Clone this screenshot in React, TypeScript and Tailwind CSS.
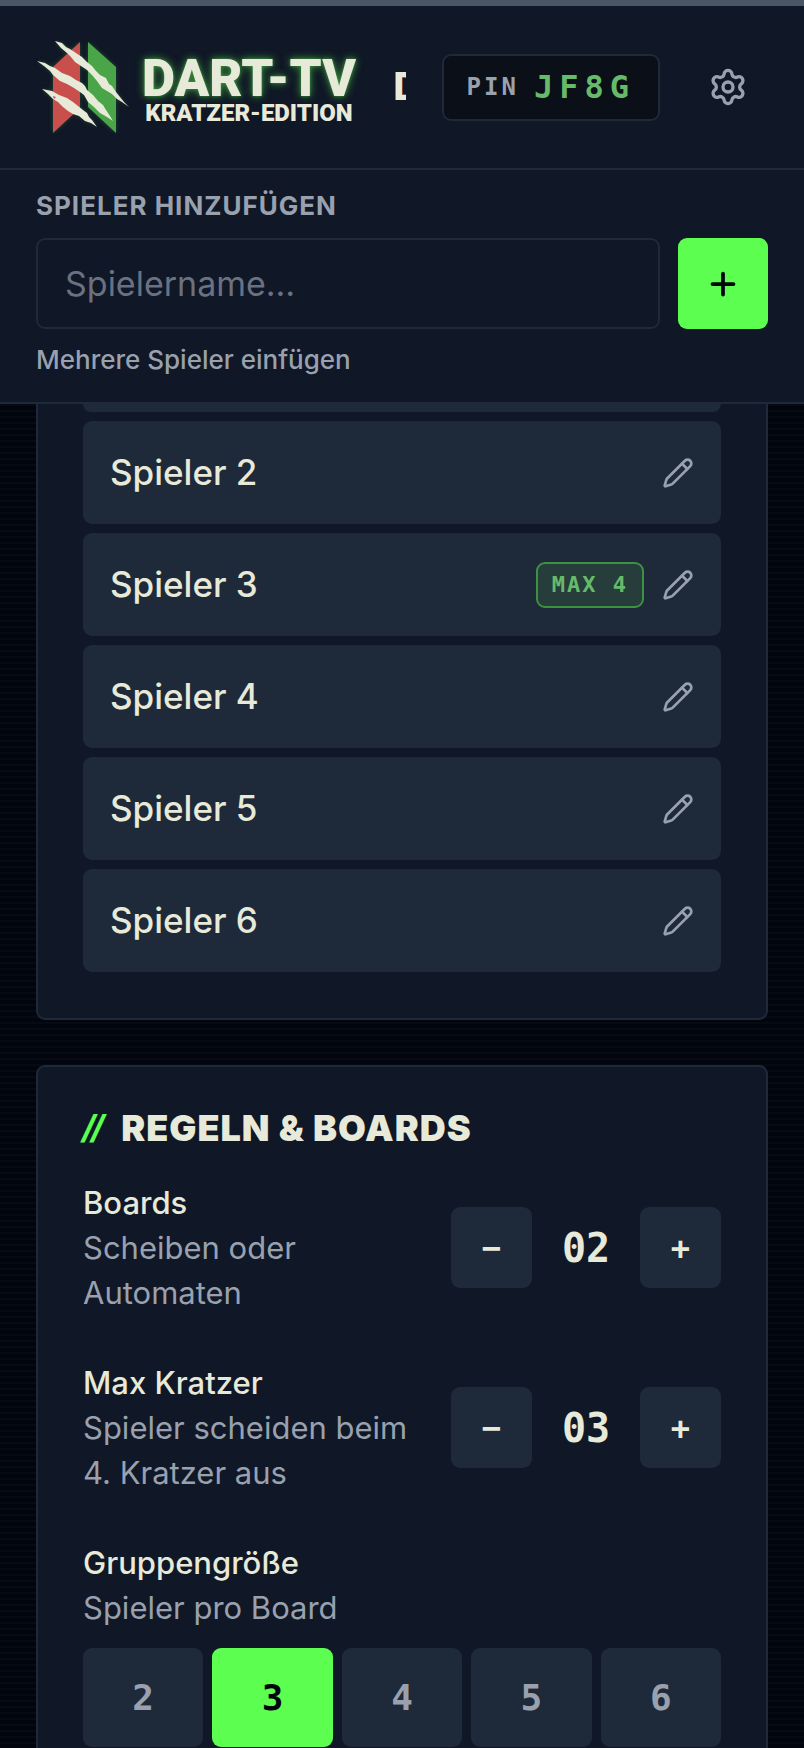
import { useState } from "react";
import { Pencil, Plus, Settings } from "lucide-react";

type Player = { name: string; max?: number };

const players: Player[] = [
  { name: "Spieler 2" },
  { name: "Spieler 3", max: 4 },
  { name: "Spieler 4" },
  { name: "Spieler 5" },
  { name: "Spieler 6" },
];

const groupSizes = [2, 3, 4, 5, 6];

function Logo() {
  return (
    <div className="flex shrink-0 items-center gap-3">
      <svg width="94" height="96" viewBox="0 0 94 96" aria-hidden="true" className="drop-shadow-[0_0_2px_rgba(76,175,80,0.3)]">
        <path d="M17 28 L44 3 V69 L17 94 Z" fill="#c94f4c" />
        <path d="M52 3 L80 28 V94 L52 68 Z" fill="#4aa548" />
        <g fill="#e7e9d9">
          <path d="M19 2 L26 4 L30 8 L34 10 L40 14 L46 18 L51 23 L56 27 L60 32 L64 36 L70 39 L73 45 L76 47 L80 53 L84 58 L88 63 L93 68 L86 63 L81 60 L76 55 L71 52 L66 49 L61 42 L56 36 L51 31 L45 27 L39 23 L35 18 L31 14 L25 9 Z" />
          <path d="M1 22 L9 24 L14 27 L19 29 L26 34 L34 37 L40 41 L46 44 L49 47 L51 51 L57 56 L62 62 L67 66 L70 71 L74 77 L77 82 L71 78 L64 74 L58 68 L52 63 L48 56 L44 53 L38 49 L31 45 L24 42 L17 36 L14 32 L8 27 Z" />
          <path d="M6 50 L11 51 L16 52 L23 56 L31 59 L37 63 L42 67 L47 71 L51 74 L53 78 L56 81 L61 88 L55 84 L49 82 L43 77 L37 75 L32 72 L27 68 L22 63 L17 60 L12 55 Z" />
        </g>
        <path d="M17 57 L20 58 L18 60 Z" fill="#c94f4c" />
      </svg>
      <div className="flex flex-col items-center pt-[10px] font-[Roboto,sans-serif] font-black text-[#e7e9d9]">
        <span className="text-[51px] leading-[42px] [text-shadow:0_0_9px_#3f9a3f,0_0_3px_#2e7d32]">DART-TV</span>
        <span className="text-[24px] leading-[26px]">KRATZER-EDITION</span>
      </div>
    </div>
  );
}

function Stepper({ title, hint, start }: { title: string; hint: string; start: number }) {
  const [value, setValue] = useState(start);
  const btn = "size-[81px] rounded-[9px] bg-[#1e2939] font-['DejaVu_Sans_Mono',monospace] text-[32px] font-bold text-[#e7e9d9]";

  return (
    <div className="flex items-center justify-between gap-[27px]">
      <div className="text-[31px] leading-[45px]">
        <p className="font-medium">{title}</p>
        <p className="text-[#99a1af]">{hint}</p>
      </div>
      <div className="flex shrink-0 items-center">
        <button className={btn} aria-label={title + " verringern"} onClick={() => setValue(Math.max(1, value - 1))}>−</button>
        <output className="w-[108px] text-center font-['DejaVu_Sans_Mono',monospace] text-[40px] font-bold">
          {String(value).padStart(2, "0")}
        </output>
        <button className={btn} aria-label={title + " erhöhen"} onClick={() => setValue(value + 1)}>+</button>
      </div>
    </div>
  );
}

export default function App() {
  const [groupSize, setGroupSize] = useState(3);

  return (
    <div className="flex min-h-screen flex-col bg-[#02050e] bg-[repeating-linear-gradient(0deg,transparent_0px,transparent_4px,#060a13_4px,#060a13_6px)] font-[Inter,sans-serif] text-[#e7e9d9]">
      <div className="h-[6px] bg-[#4a5565]" />

      {/* Header */}
      <header className="flex h-[164px] items-center border-b-2 border-[#1e2939] bg-[#101726] px-9">
        <Logo />
        <div className="ml-auto flex items-center">
          <h1 className="w-3 overflow-hidden font-[Roboto,sans-serif] text-[38px] leading-10 font-black">D</h1>
          <div className="ml-9 flex h-[67px] items-center gap-[15px] rounded-[9px] border-2 border-[#1e2939] bg-[#0b0f18] px-[23px] font-['DejaVu_Sans_Mono',monospace] font-bold">
            <span className="text-[24px] tracking-[3px] text-[#99a1af]">PIN</span>
            <span className="text-[32px] tracking-[6px] text-[#66bb6a]">JF8G</span>
          </div>
          <button className="ml-7 flex size-20 items-center justify-center text-[#99a1af]" aria-label="Einstellungen">
            <Settings size={40} />
          </button>
        </div>
      </header>

      {/* Add player */}
      <form className="flex flex-col border-b-2 border-[#1e2939] bg-[#101726] px-9 pt-[18px] pb-6" onSubmit={e => e.preventDefault()}>
        <label htmlFor="player-name" className="text-[26px] leading-9 font-bold tracking-[1px] text-[#99a1af] uppercase">
          Spieler hinzufügen
        </label>
        <div className="mt-[14px] flex gap-[18px]">
          <input
            id="player-name"
            placeholder="Spielername…"
            className="h-[91px] min-w-0 flex-1 rounded-[9px] border-2 border-[#1e2939] bg-transparent px-[27px] text-[34px] outline-none placeholder:text-[#6a7282]"
          />
          <button type="submit" aria-label="Hinzufügen" className="flex w-[90px] items-center justify-center rounded-[9px] bg-[#5cff50] text-[#02050e]">
            <Plus size={36} strokeWidth={2.5} />
          </button>
        </div>
        <button type="button" className="mt-[13px] self-start text-[26px] leading-9 font-medium text-[#99a1af]">
          Mehrere Spieler einfügen
        </button>
      </form>

      <main className="flex flex-1 flex-col gap-[45px] px-9">
        {/* Player list, scrolled under the header */}
        <section className="rounded-b-[9px] border-2 border-t-0 border-[#1e2939] bg-[#101726] px-[45px] pb-[46px]">
          <div className="h-2 rounded-b-[9px] bg-[#1e2939]" />
          <ul className="mt-[9px] flex flex-col gap-[9px]">
            {players.map(p => (
              <li key={p.name} className="flex h-[103px] items-center rounded-[9px] bg-[#1e2939] px-[27px]">
                <span className="flex-1 text-[35px] font-medium">{p.name}</span>
                {p.max && (
                  <span className="mr-[18px] flex h-[46px] items-center rounded-[9px] border-2 border-[#3d9142] bg-[#263d3b] px-[14px] font-['DejaVu_Sans_Mono',monospace] text-[22px] font-bold tracking-[2px] text-[#66bb6a]">
                    MAX {p.max}
                  </span>
                )}
                <button aria-label={p.name + " bearbeiten"} className="text-[#99a1af]">
                  <Pencil size={32} />
                </button>
              </li>
            ))}
          </ul>
        </section>

        {/* Rules */}
        <section className="flex flex-1 flex-col rounded-t-[9px] border-2 border-b-0 border-[#1e2939] bg-[#101726] px-[45px] pt-9">
          <h2 className="flex items-center gap-4 text-[36px] leading-[50px] font-black tracking-[1px] uppercase">
            <span className="font-[Roboto,sans-serif] text-[#5cff50] italic">//</span>
            Regeln &amp; Boards
          </h2>
          <div className="mt-[27px] flex flex-col gap-[45px]">
            <Stepper title="Boards" hint="Scheiben oder Automaten" start={2} />
            <Stepper title="Max Kratzer" hint="Spieler scheiden beim 4. Kratzer aus" start={3} />
            <div>
              <p className="text-[31px] leading-[45px] font-medium">Gruppengröße</p>
              <p className="text-[31px] leading-[45px] text-[#99a1af]">Spieler pro Board</p>
              <div className="mt-[18px] grid grid-cols-5 gap-[9px]">
                {groupSizes.map(n => (
                  <button
                    key={n}
                    onClick={() => setGroupSize(n)}
                    className={"h-[99px] rounded-[9px] font-['DejaVu_Sans_Mono',monospace] text-[36px] font-bold " + (n === groupSize ? "bg-[#5cff50] text-[#02050e]" : "bg-[#1e2939] text-[#99a1af]")}
                  >
                    {n}
                  </button>
                ))}
              </div>
            </div>
          </div>
        </section>
      </main>
    </div>
  );
}
